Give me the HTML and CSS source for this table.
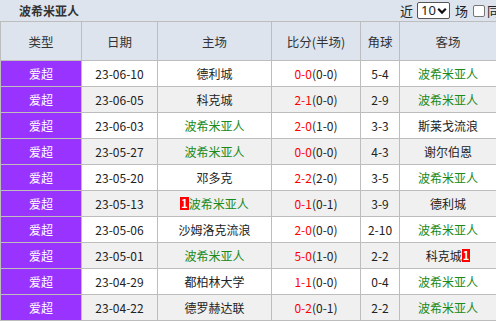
FILE: index.html
```html
<!DOCTYPE html>
<html lang="zh">
<head>
<meta charset="utf-8">
<link rel="stylesheet" href="styles.css">
</head>
<body>
<div class="page">
  <div class="titlebar">
    <span class="title">波希米亚人</span>
    <div class="controls">
      <span class="lbl">近</span>
      <span class="sel">10<svg class="chev" width="10" height="8" viewBox="0 0 10 8"><path d="M1.2 1.8 L5 5.6 L8.8 1.8" fill="none" stroke="#111" stroke-width="2.2"/></svg></span>
      <span class="lbl">场</span>
      <span class="chk"></span>
      <span class="lbl">同</span>
    </div>
  </div>
  <table class="tbl">
    <colgroup>
      <col class="c1"><col class="c2"><col class="c3"><col class="c4"><col class="c5"><col class="c6">
    </colgroup>
    <thead>
      <tr><th>类型</th><th>日期</th><th>主场</th><th>比分(半场)</th><th>角球</th><th>客场</th></tr>
    </thead>
    <tbody>
      <tr><td class="lg">爱超</td><td>23-06-10</td><td>德利城</td><td><span class="r">0-0</span>(0-0)</td><td>5-4</td><td class="g">波希米亚人</td></tr>
      <tr class="alt"><td class="lg">爱超</td><td>23-06-05</td><td>科克城</td><td><span class="r">2-1</span>(0-0)</td><td>2-9</td><td class="g">波希米亚人</td></tr>
      <tr><td class="lg">爱超</td><td>23-06-03</td><td class="g">波希米亚人</td><td><span class="r">2-0</span>(1-0)</td><td>3-3</td><td>斯莱戈流浪</td></tr>
      <tr class="alt"><td class="lg">爱超</td><td>23-05-27</td><td class="g">波希米亚人</td><td><span class="r">0-0</span>(0-0)</td><td>4-3</td><td>谢尔伯恩</td></tr>
      <tr><td class="lg">爱超</td><td>23-05-20</td><td>邓多克</td><td><span class="r">2-2</span>(2-0)</td><td>3-5</td><td class="g">波希米亚人</td></tr>
      <tr class="alt"><td class="lg">爱超</td><td>23-05-13</td><td class="g"><span class="card">1</span>波希米亚人</td><td><span class="r">0-1</span>(0-1)</td><td>3-9</td><td>德利城</td></tr>
      <tr><td class="lg">爱超</td><td>23-05-06</td><td>沙姆洛克流浪</td><td><span class="r">2-0</span>(0-0)</td><td>2-10</td><td class="g">波希米亚人</td></tr>
      <tr class="alt"><td class="lg">爱超</td><td>23-05-01</td><td class="g">波希米亚人</td><td><span class="r">5-0</span>(1-0)</td><td>2-2</td><td>科克城<span class="card">1</span></td></tr>
      <tr><td class="lg">爱超</td><td>23-04-29</td><td>都柏林大学</td><td><span class="r">1-1</span>(0-0)</td><td>0-4</td><td class="g">波希米亚人</td></tr>
      <tr class="alt"><td class="lg">爱超</td><td>23-04-22</td><td>德罗赫达联</td><td><span class="r">0-2</span>(0-1)</td><td>2-2</td><td class="g">波希米亚人</td></tr>
    </tbody>
  </table>
</div>
</body>
</html>
```

FILE: styles.css
```css
html, body {
  margin: 0;
  padding: 0;
  background: #ffffff;
}
.page {
  width: 496px;
  overflow: hidden;
  font-family: "Noto Sans CJK SC", "Noto Sans", sans-serif;
  font-size: 12px;
  color: #222;
}
.titlebar {
  height: 21px;
  background: #dde4ee;
  display: flex;
  align-items: center;
  white-space: nowrap;
  overflow: hidden;
}
.title {
  flex: none;
  font-weight: bold;
  font-size: 12px;
  color: #333;
  margin-left: 19px;
  line-height: 21px;
}
.controls {
  flex: none;
  display: flex;
  align-items: center;
  margin-left: auto;
  width: 96px;
  font-size: 13px;
  color: #222;
}
.lbl {
  flex: none;
  line-height: 21px;
}
.sel {
  flex: none;
  display: inline-flex;
  align-items: center;
  height: 17px;
  width: 33px;
  box-sizing: border-box;
  border: 1px solid #555;
  border-radius: 2px;
  background: #fff;
  margin: 0 5px 0 4px;
  padding-left: 3px;
  font-family: "Noto Sans", sans-serif;
  font-size: 13px;
  line-height: 15px;
}
.chev {
  margin-left: 1px;
}
.chk {
  flex: none;
  display: inline-block;
  width: 12px;
  height: 12px;
  box-sizing: border-box;
  border: 1px solid #767676;
  border-radius: 2px;
  background: #fff;
  margin: 0 2px 0 5px;
}
.tbl {
  border-collapse: collapse;
  table-layout: fixed;
  width: 496px;
}
.c1 { width: 81px; }
.c2 { width: 76px; }
.c3 { width: 114px; }
.c4 { width: 89px; }
.c5 { width: 39px; }
.c6 { width: 97px; }
.tbl th, .tbl td {
  border: 1px solid #bdbdbd;
  text-align: center;
  padding: 0;
  white-space: nowrap;
  overflow: hidden;
}
.tbl th {
  height: 38px;
  background: #dde4ee;
  font-weight: normal;
  font-size: 12.5px;
  color: #333;
}
.tbl td {
  height: 25px;
  background: #fff;
  color: #222;
}
.tbl tr.alt td {
  background: #f0f0f0;
}
.tbl td.lg, .tbl tr.alt td.lg {
  background: #9933ff;
  color: #fff;
}
.tbl td.g {
  color: #1a8a1a;
}
.r {
  color: #ff0000;
}
.card {
  display: inline-block;
  background: #ff0000;
  color: #fff;
  font-weight: bold;
  font-size: 11px;
  line-height: 13px;
  padding: 0 1px;
  vertical-align: 1px;
}
```
